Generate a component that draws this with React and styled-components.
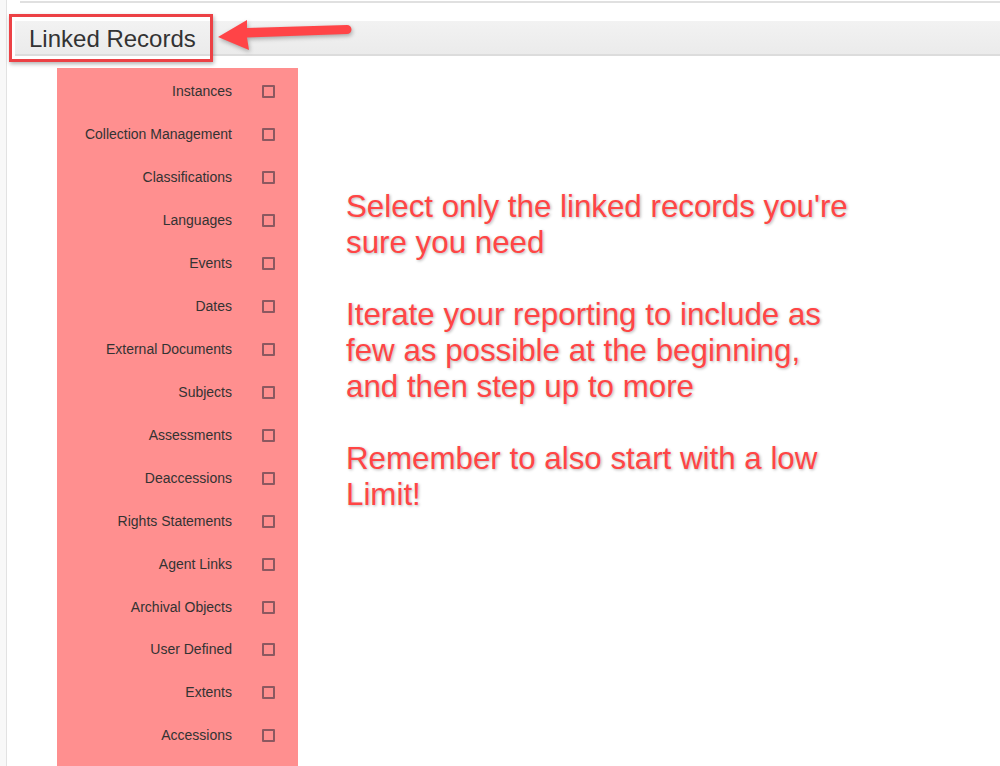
import React from "react";
import styled, { createGlobalStyle } from "styled-components";

const GlobalStyle = createGlobalStyle`
  html, body {
    margin: 0;
    padding: 0;
    background: #fff;
    font-family: "Liberation Sans", Arial, sans-serif;
  }
`;

const Page = styled.div`
  display: flex;
  min-height: 766px;
  overflow: hidden;
`;

const Gutter = styled.div`
  width: 6px;
  flex-shrink: 0;
  background: #f8f8f8;
  border-right: 1px solid #e2e2e2;
`;

const Main = styled.div`
  flex: 1;
  position: relative;
`;

const TopEdge = styled.div`
  margin-left: 13px;
  height: 1px;
  border-bottom: 2px solid #e0e0e0;
`;

const SectionBar = styled.div`
  margin: 18px 0 0 8px;
  height: 35px;
  box-sizing: border-box;
  display: flex;
  align-items: center;
  padding: 2px 0 0 14px;
  background: linear-gradient(#f2f2f2, #ebebeb);
  border-bottom: 2px solid #dcdcdc;
  font-size: 24px;
  color: #333;
`;

const Callout = styled.div`
  position: absolute;
  left: 2px;
  top: 14px;
  width: 198px;
  height: 42px;
  border: 3px solid #ec4145;
  box-shadow: 1px 2px 4px rgba(0, 0, 0, 0.3);
`;

const Arrow = styled.svg`
  position: absolute;
  left: 207px;
  top: 16px;
  filter: drop-shadow(1px 2px 2px rgba(0, 0, 0, 0.3));
`;

const Body = styled.div`
  display: flex;
  margin-top: 12px;
`;

const RecordPanel = styled.div`
  margin-left: 50px;
  width: 241px;
  flex-shrink: 0;
  min-height: 700px;
  padding-top: 2px;
  background: #ff8f8f;
`;

const Row = styled.label`
  display: grid;
  grid-template-columns: 175px 13px;
  column-gap: 30px;
  align-items: center;
  height: 42.93px;
  font-size: 14px;
  color: #333;
`;

const Label = styled.span`
  text-align: right;
`;

const Box = styled.span`
  width: 9px;
  height: 9px;
  border: 2px solid #8c5860;
  border-radius: 1px;
  margin-top: 1px;
`;

const Notes = styled.div`
  margin-left: 48px;
  padding-top: 121px;
  font-size: 31.3px;
  line-height: 36px;
  color: #ff4545;
  text-shadow: 1px 1px 3px rgba(0, 0, 0, 0.3);
`;

const Para = styled.p`
  margin: 0 0 36px;
  width: 515px;
`;

const records = [
  "Instances",
  "Collection Management",
  "Classifications",
  "Languages",
  "Events",
  "Dates",
  "External Documents",
  "Subjects",
  "Assessments",
  "Deaccessions",
  "Rights Statements",
  "Agent Links",
  "Archival Objects",
  "User Defined",
  "Extents",
  "Accessions",
];

const App = () => {
  return (
    <>
      <GlobalStyle />
      <Page>
        <Gutter />
        <Main>
          <TopEdge />
          <SectionBar>Linked Records</SectionBar>
          <Callout />
          <Arrow width="140" height="40" viewBox="0 0 140 40">
            <path
              d="M4 21 L33 4 L33 12 L133 9 a4.5 4.5 0 0 1 0 9 L33 21.5 L35 34 Z"
              fill="#ff4447"
            />
          </Arrow>
          <Body>
            <RecordPanel>
              {records.map(r => (
                <Row key={r}>
                  <Label>{r}</Label>
                  <Box />
                </Row>
              ))}
            </RecordPanel>
            <Notes>
              <Para>Select only the linked records you're sure you need</Para>
              <Para>
                Iterate your reporting to include as few as possible at the
                beginning, and then step up to more
              </Para>
              <Para>Remember to also start with a low Limit!</Para>
            </Notes>
          </Body>
        </Main>
      </Page>
    </>
  );
};

export default App;
